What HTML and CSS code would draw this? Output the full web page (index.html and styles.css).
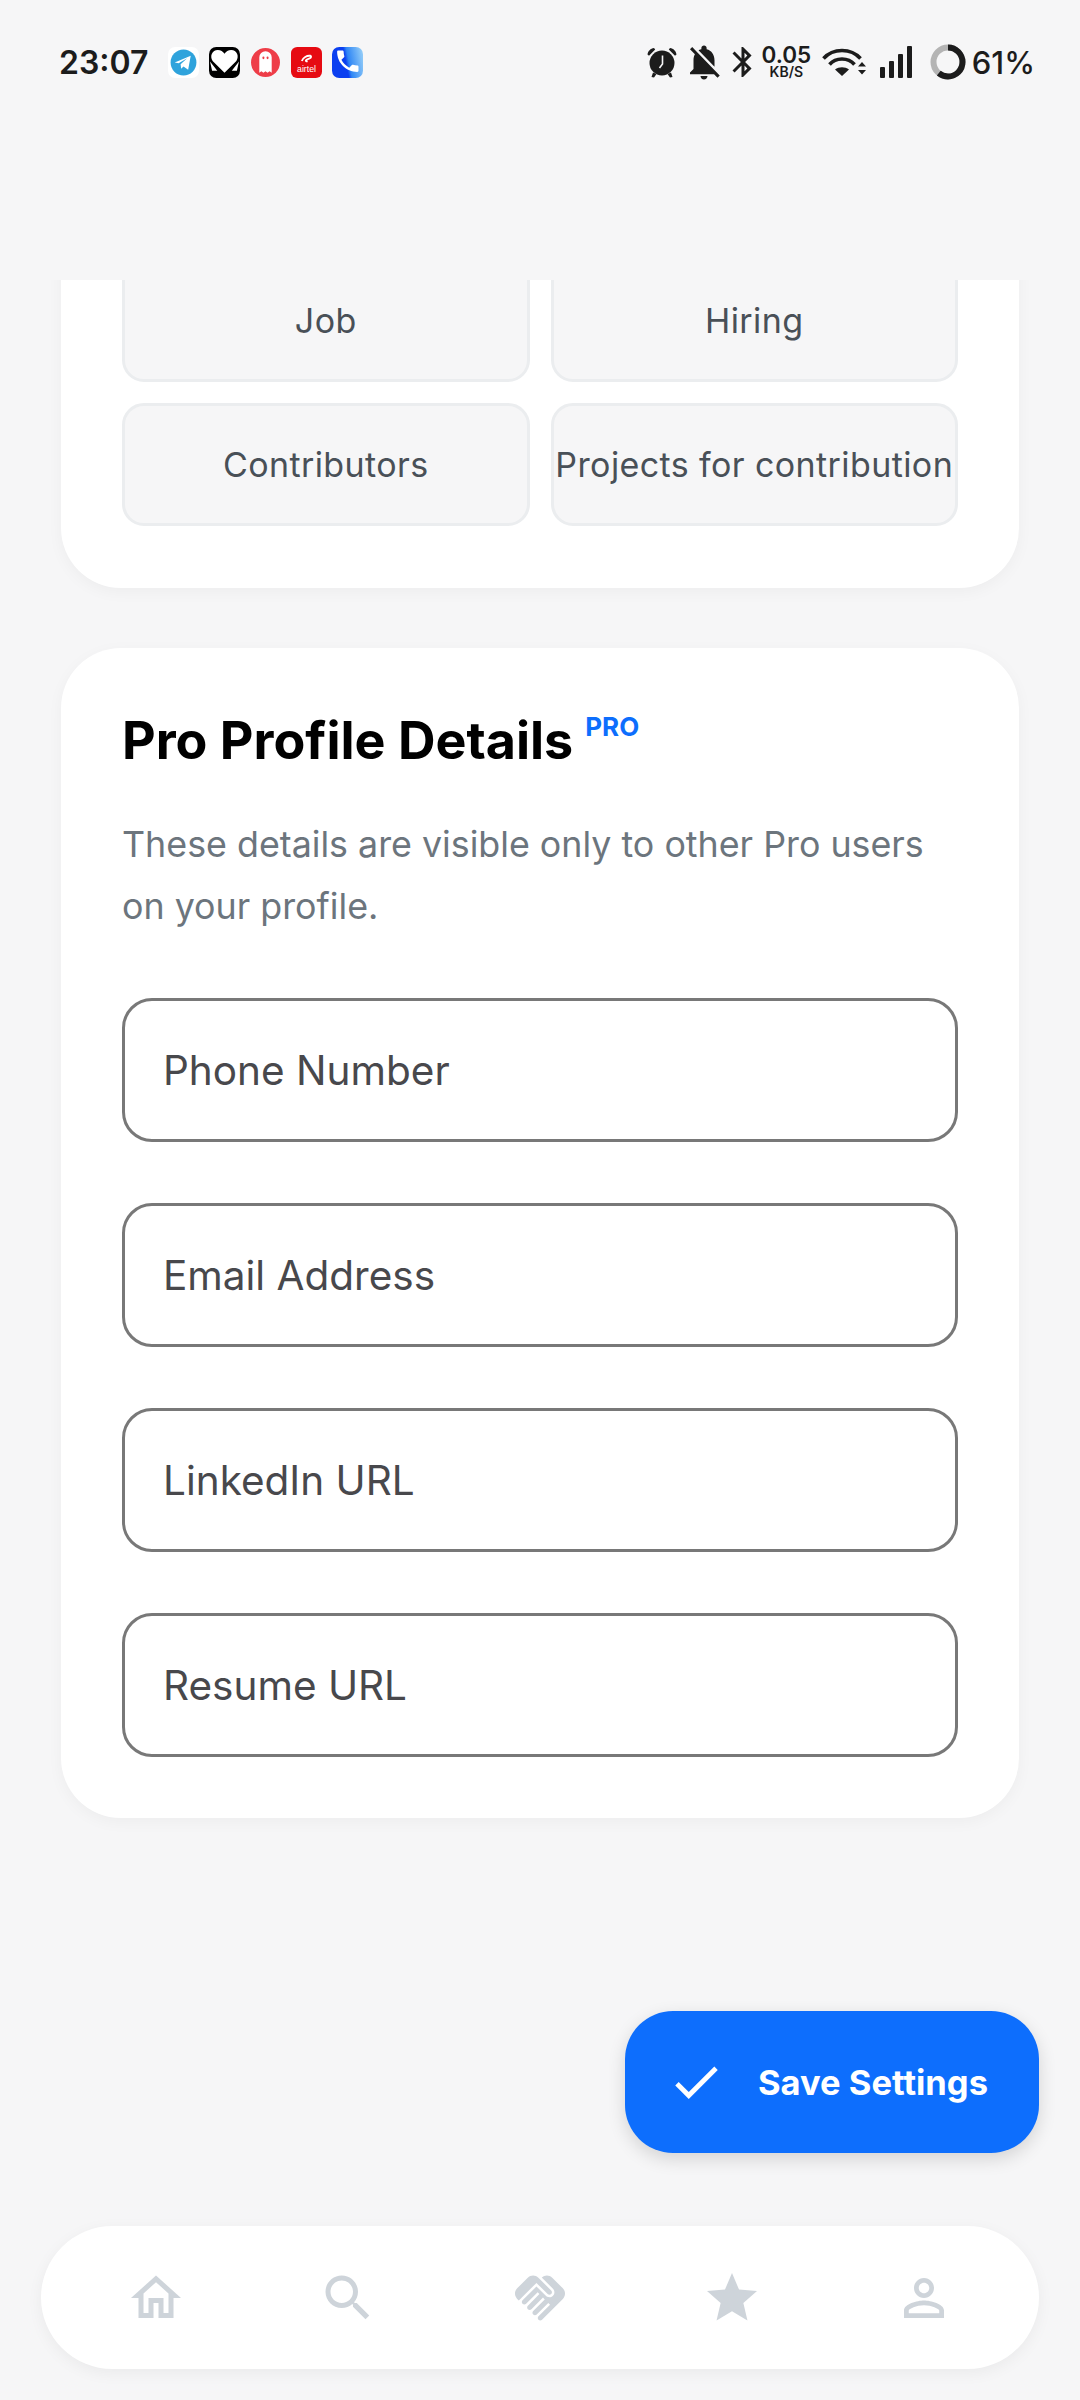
FILE: index.html
```html
<!DOCTYPE html>
<html lang="en">
<head>
    <meta charset="UTF-8">
    <meta name="viewport" content="width=device-width, initial-scale=1.0">
    <title>Settings</title>
    <link rel="stylesheet" href="styles.css">
</head>
<body>
    <div class="status-bar">
        <span class="time">23:07</span>
        <div class="app-icons">
            <svg class="app-icon" viewBox="0 0 30 30"><rect width="30" height="30" rx="7" fill="#fff"/><circle cx="15" cy="15" r="12.5" fill="#2fa3dc"/><path d="M6.5 15 22 8.5 19.5 22l-4.5-3.2-2.3 2.2-.5-4.2 6.3-6-8.2 5z" fill="#fff"/></svg>
            <svg class="app-icon" viewBox="0 0 30 30"><rect width="30" height="30" rx="7" fill="#000"/><path d="M15 25 3.5 13.5C.5 9 3 3 8.5 3c3 0 5 1.500 6.500 3.500C16.500 4.500 18.500 3 21.500 3 27 3 29.500 9 26.500 13.500z" fill="#fff"/><path d="M1 14 8 23H3zM29 14l-7 9h5z" fill="#fff"/></svg>
            <svg class="app-icon" viewBox="0 0 30 30"><circle cx="15" cy="15" r="14" fill="#ee3d48"/><path d="M9 25V10a6 6 0 0 1 12 0v15l-2-1.500-2 1.500-2-1.500-2 1.500-2-1.500z" fill="#fff"/><ellipse cx="13" cy="10.500" rx="1" ry="1.400" fill="#ee3d48"/><ellipse cx="17" cy="10.500" rx="1" ry="1.400" fill="#ee3d48"/></svg>
            <svg class="app-icon" viewBox="0 0 30 30"><rect width="30" height="30" rx="6" fill="#e60a12"/><path d="M10.500 13.500c1-3 5-5.500 8-5 1.500.3 1 2-.5 2.500-1.500.500-2.800.8-3.500 1.800-.5.8.500 1.300 1.500.9" fill="none" stroke="#fff" stroke-width="1.800"/><text class="airtel-text" x="15" y="24" text-anchor="middle">airtel</text></svg>
            <svg class="app-icon" viewBox="0 0 30 30"><defs><linearGradient id="phoneBg" x1="0" x2="1" y1="0.600" y2="0.400"><stop offset="0.450" stop-color="#0b3ff0"/><stop offset="0.550" stop-color="#2f86f5"/><stop offset="1" stop-color="#8cc8f8"/></linearGradient></defs><rect width="30" height="30" rx="7" fill="url(#phoneBg)"/><path transform="translate(1.500 0) scale(1.150)" d="M6.620 10.790c1.440 2.830 3.760 5.140 6.590 6.590l2.200-2.200c.27-.27.67-.36 1.020-.24 1.120.37 2.330.57 3.570.57.55 0 1 .45 1 1V20c0 .55-.45 1-1 1-9.390 0-17-7.610-17-17 0-.55.45-1 1-1h3.500c.55 0 1 .45 1 1 0 1.250.2 2.450.57 3.570.11.35.03.74-.25 1.020l-2.200 2.200z" fill="#fff"/></svg>
        </div>
        <div class="sys-icons">
            <svg class="sys-icon alarm" viewBox="0 0 32 32"><path d="M1.500 8.500C2 5 4.500 2.500 8 2l1.200 1.500-6.200 6.300zM30.500 8.500C30 5 27.500 2.500 24 2l-1.200 1.500 6.200 6.300z"/><circle cx="16" cy="17" r="12.500"/><path d="M7 26.500 5.500 31l2.500.5 2.500-3.500zM25 26.500l1.500 4.500-2.500.5-2.500-3.500z"/><path d="M16.500 9.500V18l-3 4" fill="none" stroke="#f6f6f7" stroke-width="1.600"/></svg>
            <svg class="sys-icon bell" viewBox="0 0 24 24"><path d="M20 18.690 7.840 6.140 5.270 3.490 4 4.760l2.800 2.800v.01c-.52.99-.8 2.160-.8 3.420v5l-2 2v1h13.730l2 2L21 19.720l-1-1.030zM12 22c1.110 0 2-.89 2-2h-4c0 1.110.89 2 2 2zm6-7.320V11c0-3.080-1.640-5.640-4.500-6.320V4c0-.83-.67-1.500-1.500-1.500s-1.500.67-1.500 1.500v.68c-.15.03-.29.08-.42.12-.1.03-.2.07-.3.11h-.01c-.2.08-.4.17-.59.27-.11.05-.22.11-.32.17L18 14.680z"/></svg>
            <svg class="sys-icon bluetooth" viewBox="0 0 24 24"><path d="M17.710 7.710 12 2h-1v7.590L6.410 5 5 6.410 10.590 12 5 17.590 6.410 19 11 14.410V22h1l5.710-5.710-4.300-4.290 4.300-4.290zM13 5.830l1.880 1.880L13 9.590V5.830zm1.880 10.460L13 18.170v-3.760l1.880 1.880z"/></svg>
            <div class="net-speed"><span class="speed-num">0.05</span><span class="speed-unit">KB/S</span></div>
            <svg class="sys-icon wifi" viewBox="0 0 44 32"><path d="M1.500 12.500C6 7.500 12 4.500 20 4.500s14 3 18.500 8M7.500 18.500C10.500 15 15 13 20 13s9.500 2 12.500 5.500" fill="none" stroke="#1c1c1c" stroke-width="3.600"/><path d="M13 23.500c2-1.500 4.500-2.200 7-2.200s5 .7 7 2.200l-7 6.500z"/><path d="M36 20.500h8l-4-4.500zM36 24h8l-4 4.500z"/></svg>
            <div class="signal"><span class="bar bar-1"></span><span class="bar bar-2"></span><span class="bar bar-3"></span><span class="bar bar-4"></span></div>
            <svg class="battery-ring" viewBox="0 0 36 36"><circle cx="18" cy="18" r="14.500" fill="none" stroke="#b4b4b4" stroke-width="6"/><circle class="battery-level" cx="18" cy="18" r="14.500" pathLength="100" fill="none" stroke="#1c1c1c" stroke-width="6" stroke-dasharray="61 39"/></svg>
            <span class="battery-text">61%</span>
        </div>
    </div>
    <div class="page-header"></div>

    <div class="content">
        <div class="card card-scrolled">
            <div class="chip-grid">
                <div class="chip">Job</div>
                <div class="chip">Hiring</div>
                <div class="chip">Contributors</div>
                <div class="chip">Projects for contribution</div>
            </div>
        </div>

        <div class="card">
            <div class="card-title">
                <h2>Pro Profile Details</h2>
                <span class="pro-tag">PRO</span>
            </div>
            <p class="card-sub">These details are visible only to other Pro users on your profile.</p>
            <div class="form-list">
                <div class="field">Phone Number</div>
                <div class="field">Email Address</div>
                <div class="field">LinkedIn URL</div>
                <div class="field">Resume URL</div>
            </div>
        </div>
    </div>

    <button class="save-btn">
        <svg class="check-icon" viewBox="0 0 24 24"><path d="M9 16.170 4.830 12l-1.410 1.410L9 19 21 7l-1.410-1.410z"/></svg>
        <span>Save Settings</span>
    </button>

    <nav class="bottom-nav">
        <div class="nav-item"><svg viewBox="0 0 24 24"><path d="M12 5.690l5 4.500V18h-2v-6H9v6H7v-7.810l5-4.500M12 3 2 12h3v8h6v-6h2v6h6v-8h3z"/></svg></div>
        <div class="nav-item"><svg viewBox="0 0 24 24"><path d="M15.500 14h-.79l-.28-.27C15.410 12.590 16 11.110 16 9.500 16 5.910 13.090 3 9.500 3S3 5.910 3 9.500 5.910 16 9.500 16c1.610 0 3.090-.59 4.230-1.570l.27.28v.79l5 4.990L20.490 19l-4.990-5zm-6 0C7.010 14 5 11.990 5 9.500S7.010 5 9.500 5 14 7.010 14 9.500 11.990 14 9.500 14z"/></svg></div>
        <div class="nav-item"><svg viewBox="0 0 24 24"><path d="M16.480 10.410c-.39.39-1.040.39-1.430 0l-4.470-4.460-7.050 7.040-.66-.63c-1.170-1.170-1.170-3.070 0-4.240l4.240-4.240c1.170-1.170 3.070-1.170 4.240 0L16.480 9c.39.39.39 1.020 0 1.410zm.7-2.120c.78.78.78 2.050 0 2.830-1.270 1.270-2.610.22-2.830 0l-3.760-3.760-5.570 5.570c-.39.39-.39 1.020 0 1.410.39.39 1.020.39 1.420 0l4.620-4.620.71.71-4.620 4.620c-.39.39-.39 1.020 0 1.410.39.39 1.020.39 1.420 0l4.620-4.620.71.71-4.620 4.620c-.39.39-.39 1.020 0 1.410.39.39 1.020.39 1.410 0l4.620-4.620.71.71-4.620 4.620c-.39.39-.39 1.020 0 1.410.39.39 1.020.39 1.410 0l8.320-8.340c1.170-1.170 1.170-3.070 0-4.240l-4.240-4.240c-1.150-1.150-3.010-1.170-4.180-.06l4.480 4.480z"/></svg></div>
        <div class="nav-item"><svg viewBox="0 0 24 24"><path d="M12 17.270 18.180 21l-1.640-7.030L22 9.240l-7.190-.61L12 2 9.190 8.630 2 9.240l5.460 4.730L5.820 21z"/></svg></div>
        <div class="nav-item"><svg viewBox="0 0 24 24"><path d="M12 5.900c1.160 0 2.100.94 2.100 2.100s-.94 2.100-2.100 2.100S9.900 9.160 9.900 8s.94-2.100 2.100-2.100m0 9c2.970 0 6.100 1.460 6.100 2.100v1.100H5.900V17c0-.64 3.130-2.100 6.100-2.100M12 4C9.790 4 8 5.790 8 8s1.790 4 4 4 4-1.790 4-4-1.790-4-4-4zm0 9c-2.670 0-8 1.340-8 4v3h16v-3c0-2.660-5.330-4-8-4z"/></svg></div>
    </nav>
</body>
</html>
```
FILE: styles.css
```css
body {
    font-family: Inter, "Noto Sans", sans-serif;
    margin: 0;
    width: 1080px;
    height: 2400px;
    position: relative;
    overflow: hidden;
    display: flex;
    flex-direction: column;
    background: #f6f6f7;
}

/* status bar */
.status-bar {
    height: 124px;
    flex-shrink: 0;
    display: flex;
    align-items: center;
    padding: 0 45px 0 59px;
    color: #1c1c1c;
}
.time {
    font-size: 32px;
    font-weight: 600;
    width: 109px;
}
.app-icons {
    display: flex;
    gap: 10px;
}
.app-icon {
    width: 31px;
    height: 31px;
}
.airtel-text {
    font-family: "Liberation Sans", sans-serif;
    font-size: 8.5px;
    fill: #fff;
}
.sys-icons {
    margin-left: auto;
    display: flex;
    align-items: center;
}
.sys-icon {
    fill: #1c1c1c;
    flex-shrink: 0;
}
.alarm {
    width: 32px;
    height: 32px;
}
.bell {
    width: 42px;
    height: 42px;
    margin-left: 5px;
}
.bluetooth {
    width: 36px;
    height: 36px;
}
.net-speed {
    display: flex;
    flex-direction: column;
    align-items: center;
    width: 51px;
    font-weight: 600;
}
.speed-num {
    font-size: 22.5px;
    line-height: 18px;
}
.speed-unit {
    font-size: 14px;
    line-height: 15px;
}
.wifi {
    width: 44px;
    height: 32px;
    margin-left: 10px;
}
.signal {
    display: flex;
    align-items: flex-end;
    gap: 4px;
    height: 32px;
    margin-left: 14px;
}
.bar {
    width: 5px;
    background: #1c1c1c;
    border-radius: 1px;
}
.bar-1 { height: 11px; }
.bar-2 { height: 17px; }
.bar-3 { height: 24px; }
.bar-4 { height: 32px; }
.battery-ring {
    width: 36px;
    height: 36px;
    margin-left: 18px;
}
.battery-level {
    transform: rotate(-90deg);
    transform-origin: 18px 18px;
}
.battery-text {
    font-size: 31px;
    font-weight: 500;
    margin-left: 6px;
}

.page-header {
    height: 156px;
    flex-shrink: 0;
}

/* scrolled content */
.content {
    flex: 1;
    min-height: 0;
    overflow: hidden;
    padding: 0 61px;
}
.card {
    background: white;
    border-radius: 60px;
    padding: 61px;
    margin-bottom: 61px;
    box-shadow: 0 4px 16px rgba(0, 0, 0, 0.04);
}
.card-scrolled {
    margin-top: -82px;
    padding-bottom: 62px;
    margin-bottom: 60px;
}
.chip-grid {
    display: grid;
    grid-template-columns: 1fr 1fr;
    gap: 21px;
}
.chip {
    height: 123px;
    box-sizing: border-box;
    display: flex;
    align-items: center;
    justify-content: center;
    background: #f6f6f7;
    border: 3px solid #ebedef;
    border-radius: 22px;
    color: #495057;
    font-size: 34px;
    letter-spacing: 0.4px;
    white-space: nowrap;
}
.card-title {
    display: flex;
    align-items: flex-start;
    gap: 12px;
}
h2 {
    margin: 0;
    padding-top: 1px;
    font-size: 52px;
    font-weight: 700;
    line-height: 62px;
    color: #000;
}
.pro-tag {
    font-size: 26px;
    font-weight: 700;
    line-height: 36px;
    color: #0d6efd;
}
.card-sub {
    margin: 41px 0 61px;
    font-size: 35.8px;
    line-height: 62px;
    color: #6c757d;
}
.form-list {
    display: flex;
    flex-direction: column;
    gap: 61px;
}
.field {
    height: 144px;
    box-sizing: border-box;
    display: flex;
    align-items: center;
    padding: 0 38px;
    border: 3px solid #787878;
    border-radius: 30px;
    font-size: 40.5px;
    color: #48484c;
}

/* floating save button */
.save-btn {
    position: absolute;
    right: 41px;
    bottom: 247px;
    width: 414px;
    height: 142px;
    display: flex;
    align-items: center;
    gap: 33px;
    padding: 0 0 0 42px;
    border: none;
    border-radius: 48px;
    background: #0d6efd;
    color: white;
    font-family: inherit;
    font-size: 34.5px;
    font-weight: 700;
    box-shadow: 0 6px 18px rgba(0, 0, 0, 0.14);
}
.check-icon {
    width: 58px;
    height: 58px;
    fill: white;
}

/* bottom nav */
.bottom-nav {
    flex-shrink: 0;
    height: 143px;
    margin: 0 41px 31px;
    padding: 0 19px;
    display: flex;
    background: white;
    border-radius: 72px;
    box-shadow: 0 4px 16px rgba(0, 0, 0, 0.05);
}
.nav-item {
    flex: 1;
    display: flex;
    align-items: center;
    justify-content: center;
}
.nav-item svg {
    width: 60px;
    height: 60px;
    fill: #ced4da;
}
```
